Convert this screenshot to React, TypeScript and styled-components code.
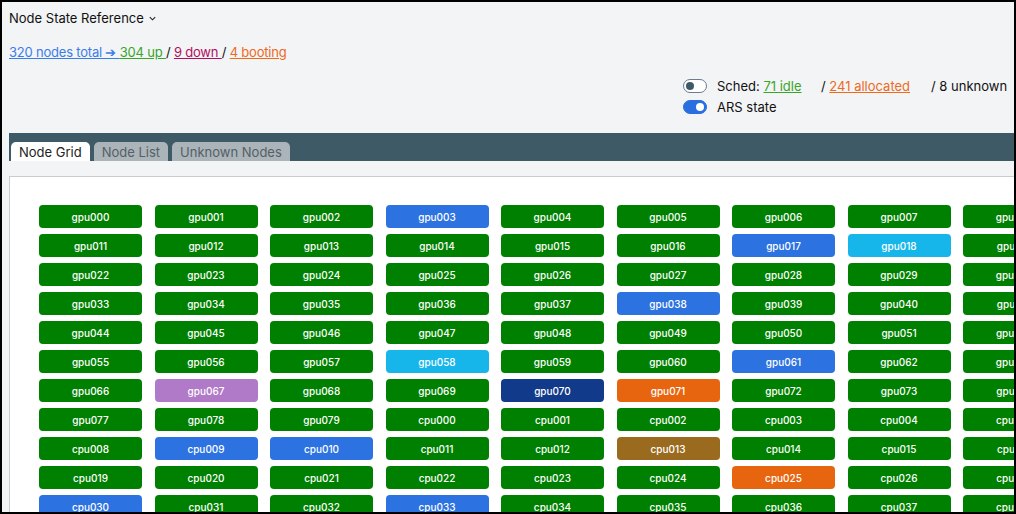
import React from 'react';
import styled, { createGlobalStyle } from 'styled-components';

const Global = createGlobalStyle`
  html, body { margin: 0; padding: 0; }
  body {
    width: 1016px; height: 514px; box-sizing: border-box;
    border: 2px solid #000; overflow: hidden;
    background: #f3f4f6; font-family: Inter, "Noto Sans", sans-serif; color: #111;
  }
`;

const Page = styled.div`
  padding: 7px 0 0 7px;
  display: flex;
  flex-direction: column;
`;

const Title = styled.div`
  font-size: 13px;
  height: 18px;
  display: flex;
  align-items: center;
  gap: 4px;
`;

const Summary = styled.div`
  margin-top: 17px;
  font-size: 13px;
  letter-spacing: -0.2px;
  height: 18px;
`;

const Link = styled.a<{ $c: string }>`
  color: ${(p) => p.$c};
  text-decoration: underline;
  cursor: pointer;
`;

const Controls = styled.div`
  margin: 15px 0 0 674px;
  display: flex;
  flex-direction: column;
  gap: 3px;
  font-size: 13px;
`;

const ToggleRow = styled.div`
  display: flex;
  align-items: center;
  gap: 10px;
  height: 18px;
`;

const Switch = styled.span<{ $on: boolean }>`
  position: relative;
  width: 22px;
  height: 12px;
  border-radius: 8px;
  background: ${(p) => (p.$on ? '#2a6fdf' : '#fff')};
  border: 1px solid ${(p) => (p.$on ? '#2a6fdf' : '#6b7b90')};
  &::after {
    content: '';
    position: absolute;
    top: 2px;
    left: ${(p) => (p.$on ? '12px' : '2px')};
    width: 8px;
    height: 8px;
    border-radius: 50%;
    background: ${(p) => (p.$on ? '#fff' : '#3d5a66')};
  }
`;

const Stat = styled.span<{ $w?: number }>`
  display: inline-block;
  min-width: ${(p) => p.$w ?? 0}px;
`;

const TabBar = styled.div`
  margin-top: 17px;
  background: #3d5a66;
  height: 28px;
  display: flex;
  align-items: flex-end;
  gap: 4px;
  padding-left: 2px;
`;

const Tab = styled.div<{ $active?: boolean }>`
  height: 19px;
  padding: 0 8px;
  border-radius: 5px 5px 0 0;
  background: ${(p) => (p.$active ? '#fff' : '#aab4b9')};
  color: ${(p) => (p.$active ? '#222' : '#555f66')};
  font-size: 13px;
  display: flex;
  align-items: center;
`;

const Panel = styled.div`
  margin-top: 15px;
  background: #fff;
  border: 1px solid #c8cdd0;
  border-right: none;
  padding: 28px 0 0 29px;
  height: 400px;
  overflow: hidden;
`;

const Grid = styled.div`
  display: grid;
  grid-template-columns: repeat(11, 103px);
  column-gap: 12.5px;
  row-gap: 6px;
  width: 1300px;
`;

const NodeBtn = styled.div<{ $bg: string }>`
  height: 23px;
  border-radius: 4px;
  background: ${(p) => p.$bg};
  color: #fff;
  font-size: 10px;
  font-weight: 500;
  display: flex;
  align-items: center;
  justify-content: center;
`;

const colors: Record<string, string> = {
  gpu003: '#2c72e0', gpu017: '#2c72e0', gpu018: '#17b6ea', gpu038: '#2c72e0',
  gpu058: '#17b6ea', gpu061: '#2c72e0', gpu067: '#b07ac8', gpu070: '#123a8a',
  gpu071: '#e8650f', cpu009: '#2c72e0', cpu010: '#2c72e0', cpu013: '#9a6b1f',
  cpu025: '#e8650f', cpu030: '#2c72e0', cpu033: '#2c72e0',
};

const nodes: string[] = [];
for (let i = 0; i < 80; i++) nodes.push('gpu' + String(i).padStart(3, '0'));
for (let i = 0; i < 52; i++) nodes.push('cpu' + String(i).padStart(3, '0'));

export default function App() {
  return (
    <>
      <Global />
      <Page>
        <Title>
          Node State Reference
          <svg width="9" height="9" viewBox="0 0 10 10">
            <path d="M2 3.5 L5 6.5 L8 3.5" fill="none" stroke="#222" strokeWidth="1.2" />
          </svg>
        </Title>
        <Summary>
          <Link $c="#3b7de8">320 nodes total ➔ </Link>
          <Link $c="#3aa52a">304 up </Link> / <Link $c="#b0105e">9 down </Link> /{' '}
          <Link $c="#ee6a1c">4 booting</Link>
        </Summary>
        <Controls>
          <ToggleRow>
            <Switch $on={false} />
            <span>
              <Stat $w={104}>Sched: <Link $c="#3aa52a">71 idle </Link></Stat>
              <Stat $w={110}>/ <Link $c="#ee6a1c">241 allocated </Link></Stat>
              <span>/ 8 unknown</span>
            </span>
          </ToggleRow>
          <ToggleRow>
            <Switch $on />
            <span>ARS state</span>
          </ToggleRow>
        </Controls>
        <TabBar>
          <Tab $active>Node Grid</Tab>
          <Tab>Node List</Tab>
          <Tab>Unknown Nodes</Tab>
        </TabBar>
        <Panel>
          <Grid>
            {nodes.map((n) => (
              <NodeBtn key={n} $bg={colors[n] ?? '#008000'}>{n}</NodeBtn>
            ))}
          </Grid>
        </Panel>
      </Page>
    </>
  );
}
